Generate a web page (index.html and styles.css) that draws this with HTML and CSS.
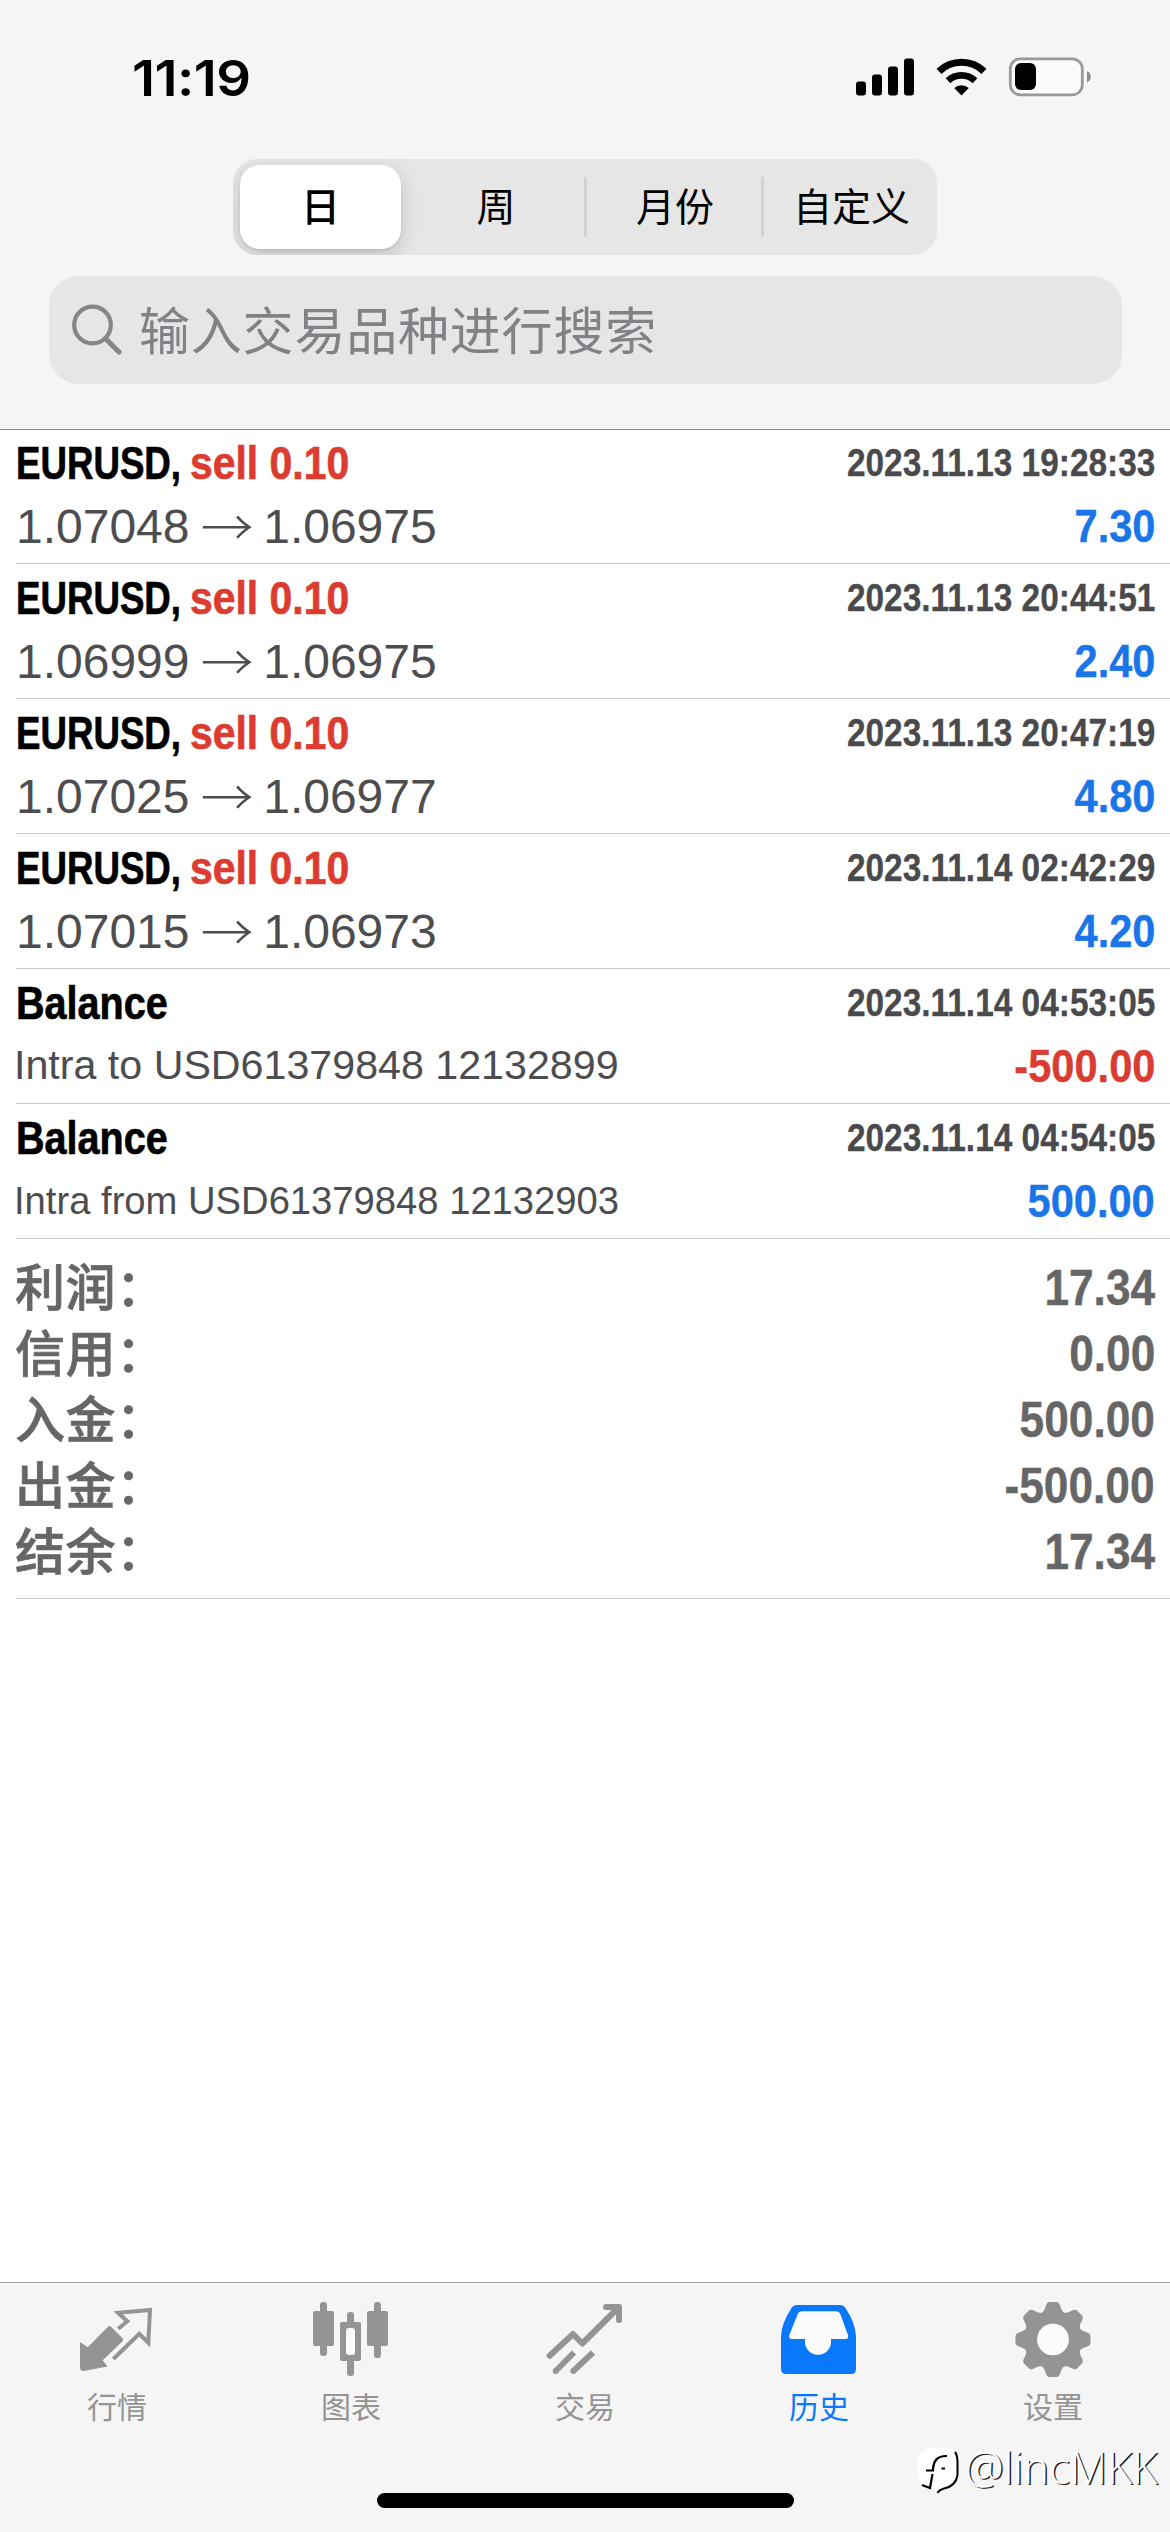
FILE: index.html
```html
<!DOCTYPE html>
<html lang="zh-CN">
<head>
<meta charset="utf-8">
<title>历史</title>
<link rel="stylesheet" href="styles.css">
</head>
<body>
<div class="screen">
  <header class="top">
    <div class="status">
      <span class="clock">11:19</span>
      <svg class="status-icons" width="236" height="40" viewBox="0 0 236 40">
        <rect x="0" y="24.5" width="10" height="14" rx="3"/>
        <rect x="16" y="17.5" width="10" height="21" rx="3"/>
        <rect x="32" y="9.500" width="10" height="29" rx="3"/>
        <rect x="48" y="1.500" width="10" height="37" rx="3"/>
        <path d="M105.500 38.500l-7.300-7.400a10.500 10.500 0 0 1 14.600 0z"/>
        <path d="M92 23.800a19.500 19.500 0 0 1 27 0" fill="none" stroke="#000" stroke-width="6.800"/>
        <path d="M83 14.300a32.500 32.500 0 0 1 45 0" fill="none" stroke="#000" stroke-width="7.200"/>
        <rect x="154.300" y="1.800" width="72" height="36" rx="10" fill="#fbfbfb" stroke="#999" stroke-width="2.800"/>
        <rect x="159" y="6" width="21" height="27" rx="6"/>
        <path d="M231 14c5 2 5 9.500 0 11.500z" fill="#8c8c8c"/>
      </svg>
    </div>
    <nav class="segments">
      <span class="segment selected">日</span>
      <span class="segment">周</span>
      <span class="segment divided">月份</span>
      <span class="segment divided">自定义</span>
    </nav>
    <div class="search">
      <svg width="52" height="52" viewBox="0 0 52 52" fill="none" stroke="#85858a">
        <circle cx="21.500" cy="21" r="18.300" stroke-width="4.200"/>
        <path d="M34.500 34.500L48 48" stroke-width="5.200" stroke-linecap="round"/>
      </svg>
      <span>输入交易品种进行搜索</span>
    </div>
  </header>

  <main class="content">
    <section class="deals">
      <article class="deal">
        <div class="line"><div class="title"><span class="symbol">EURUSD,</span><span class="sell">sell 0.10</span></div><time>2023.11.13 19:28:33</time></div>
        <div class="line second"><span class="price">1.07048 <i>→</i> 1.06975</span><span class="amount">7.30</span></div>
      </article>
      <article class="deal">
        <div class="line"><div class="title"><span class="symbol">EURUSD,</span><span class="sell">sell 0.10</span></div><time>2023.11.13 20:44:51</time></div>
        <div class="line second"><span class="price">1.06999 <i>→</i> 1.06975</span><span class="amount">2.40</span></div>
      </article>
      <article class="deal">
        <div class="line"><div class="title"><span class="symbol">EURUSD,</span><span class="sell">sell 0.10</span></div><time>2023.11.13 20:47:19</time></div>
        <div class="line second"><span class="price">1.07025 <i>→</i> 1.06977</span><span class="amount">4.80</span></div>
      </article>
      <article class="deal">
        <div class="line"><div class="title"><span class="symbol">EURUSD,</span><span class="sell">sell 0.10</span></div><time>2023.11.14 02:42:29</time></div>
        <div class="line second"><span class="price">1.07015 <i>→</i> 1.06973</span><span class="amount">4.20</span></div>
      </article>
      <article class="deal">
        <div class="line"><div class="title"><span class="balance">Balance</span></div><time>2023.11.14 04:53:05</time></div>
        <div class="line second"><span class="note">Intra to USD61379848 12132899</span><span class="amount loss">-500.00</span></div>
      </article>
      <article class="deal">
        <div class="line"><div class="title"><span class="balance">Balance</span></div><time>2023.11.14 04:54:05</time></div>
        <div class="line second"><span class="note small">Intra from USD61379848 12132903</span><span class="amount">500.00</span></div>
      </article>
    </section>
    <section class="summary">
      <div class="total"><span class="label">利润：</span><span class="sum">17.34</span></div>
      <div class="total"><span class="label">信用：</span><span class="sum">0.00</span></div>
      <div class="total"><span class="label">入金：</span><span class="sum">500.00</span></div>
      <div class="total"><span class="label">出金：</span><span class="sum">-500.00</span></div>
      <div class="total"><span class="label">结余：</span><span class="sum">17.34</span></div>
    </section>
  </main>

  <footer class="bottom">
    <nav class="tabs">
      <div class="tab">
        <svg viewBox="0 0 80 80">
          <path d="M3 42L10.700 47.300 31 26.800q1.500-1.500 3 0L45.500 38.300q1.500 1.500 0 3L25.700 60.300 30.500 66.500 6.500 71q-3.500 0-3.500-3z"/>
          <path d="M41.300 28.700L50.300 21.200 41 12.800 73 10 71.300 42.700 62.300 33.800 36.300 59" fill="none" stroke="currentColor" stroke-width="4"/>
        </svg>
        <span>行情</span>
      </div>
      <div class="tab">
        <svg viewBox="0 0 80 80">
          <rect x="9" y="2" width="7" height="54" rx="3"/><rect x="2" y="11" width="21" height="35" rx="2"/>
          <rect x="63" y="2" width="7" height="56" rx="3"/><rect x="56" y="11" width="21" height="35" rx="2"/>
          <rect x="36" y="12" width="7" height="64" rx="3"/><rect x="29" y="22" width="21" height="39" rx="2"/>
          <rect x="35" y="28" width="9" height="27" rx="3" fill="#fbfbfb"/>
        </svg>
        <span>图表</span>
      </div>
      <div class="tab">
        <svg viewBox="0 0 80 80" fill="none" stroke="currentColor" stroke-width="6">
          <path d="M4.700 55.700L28 34 37.300 43.500 73.500 7.500" stroke-linecap="round" stroke-linejoin="round"/>
          <path d="M61 7H74V20" stroke-linecap="round" stroke-linejoin="round"/>
          <circle cx="10.700" cy="71" r="3" fill="currentColor" stroke="none"/><circle cx="28.300" cy="71" r="3" fill="currentColor" stroke="none"/>
          <path d="M10.700 71L29 52.500M28.300 71L48 52.500"/>
        </svg>
        <span>交易</span>
      </div>
      <div class="tab active">
        <svg viewBox="0 0 80 80">
          <path fill-rule="evenodd" d="M18 5H61Q64.500 5 66.500 8Q77 24 77 37V69Q77 74 72 74H7Q2 74 2 69V37Q2 24 12.500 8Q14.500 5 18 5zM23 11.300Q20 11.300 18.500 14.500L10.300 35Q9.500 39 13 39H26V42A13 12.700 0 0 0 52 42V39H66.500Q70 39 69 35L61.500 14.500Q60 11.300 57 11.300z"/>
          <path d="M24 12H56.500Q59 12 60.500 15L68 35Q69 38.500 66 38.500H51.500V42A12.500 12.300 0 0 1 26.500 42V38.500H13Q10.500 38.500 11.500 35L19.500 15Q21 12 24 12z" fill="#fbfbfb"/>
        </svg>
        <span>历史</span>
      </div>
      <div class="tab">
        <svg viewBox="-40 -39.500 80 80">
          <defs><path id="tooth" d="M-13.500-22L-9.500-28.500Q-8-30.500-7.300-33.500Q-6-37.500-3.500-37.500H3.500Q6-37.500 7.300-33.500Q8-30.500 9.500-28.500L13.500-22z"/></defs>
          <circle r="22.500" fill="none" stroke="currentColor" stroke-width="13.500"/>
          <use href="#tooth"/><use href="#tooth" transform="rotate(45)"/><use href="#tooth" transform="rotate(90)"/><use href="#tooth" transform="rotate(135)"/>
          <use href="#tooth" transform="rotate(180)"/><use href="#tooth" transform="rotate(225)"/><use href="#tooth" transform="rotate(270)"/><use href="#tooth" transform="rotate(315)"/>
          <circle r="15.700" fill="#fbfbfb"/>
        </svg>
        <span>设置</span>
      </div>
    </nav>
    <div class="home"></div>
    <div class="watermark">
      <svg width="44" height="50" viewBox="0 0 44 50">
        <path d="M13 1H30Q40 2 40.500 14V28Q39 39 27 41.500Q22 43 21 47Q19 41 12 40Q1 38 1 27V14Q1 3 13 1z" fill="#fff"/>
        <path d="M38 5Q40.500 8 40.500 16V28Q39 39 27 41.500Q22 43 20.500 46" fill="none" stroke="#000" stroke-width="2"/>
        <path d="M5 38L13 41L15.500 27M9 23.500H16Q16 8.500 30 9M24.500 21.500H28" fill="none" stroke="#000" stroke-width="2.200"/>
      </svg>
      <span>@lincMKK</span>
    </div>
  </footer>
</div>
</body>
</html>
```
FILE: styles.css
```css
* { box-sizing: border-box; }
body {
  margin: 0;
  background: #fff;
  font-family: "Liberation Sans", "Noto Sans CJK SC", sans-serif;
}
.screen {
  width: 1170px;
  height: 2532px;
  display: flex;
  flex-direction: column;
  background: #fff;
  overflow: hidden;
}

/* Header */
.top {
  height: 430px;
  flex: none;
  background: #f5f5f5;
  border-bottom: 1px solid #8c8c8c;
}
.status {
  height: 159px;
  padding: 57px 78px 0 132px;
  display: flex;
  justify-content: space-between;
  align-items: flex-start;
}
.clock {
  font: 600 50px/42px Inter, sans-serif;
  letter-spacing: -0.5px;
  transform: scaleX(1.09);
  transform-origin: left;
}
.status-icons { display: block; }
.segments {
  width: 704px;
  height: 96px;
  margin-left: 233px;
  padding: 6px 0;
  border-radius: 24px;
  background: #e6e6e6;
  display: grid;
  grid-template-columns: 175px 176px 177px 176px;
  align-items: center;
  overflow: hidden;
}
.segment {
  padding-bottom: 6px;
  font: 400 39px/54px "Noto Sans CJK SC", sans-serif;
  text-align: center;
  color: #000;
}
.divided {
  padding-left: 2px;
  border-left: 3px solid #d2d2d2;
}
.selected {
  height: 84px;
  margin: 0 7px;
  line-height: 78px;
  font-weight: 500;
  border-radius: 20px;
  background: #fff;
  box-shadow: 0 6px 20px rgba(0, 0, 0, 0.16), 0 2px 3px rgba(0, 0, 0, 0.08);
}
.search {
  width: 1073px;
  height: 108px;
  margin: 21px 0 0 49px;
  padding-left: 22px;
  border-radius: 30px;
  background: #e6e6e8;
  display: flex;
  align-items: center;
  gap: 16px;
  color: #828286;
  font: 400 51px/72px "Noto Sans CJK SC", sans-serif;
  letter-spacing: 0.8px;
}
.search span { padding-bottom: 4px; }

/* Deals */
.content { flex: 1; }
.deals { margin-top: -1px; }
.deal, .summary {
  margin-left: 16px;
  padding-right: 15px;
  border-bottom: 1px solid #c6c6c8;
}
.deal {
  height: 135px;
  padding-top: 4px;
}
.line {
  height: 60px;
  display: flex;
  justify-content: space-between;
  align-items: center;
  white-space: nowrap;
}
.second { height: 65px; }
time, .amount, .sum { font-weight: 700; }
.title {
  display: flex;
  font-size: 47px;
  font-weight: 700;
  line-height: 54px;
  -webkit-text-stroke: 0.7px currentColor;
}
.title span {
  display: block;
  transform-origin: left;
}
.symbol {
  width: 174px;
  transform: scaleX(0.78);
}
.sell {
  color: #dc3c30;
  transform: scaleX(0.87);
}
.balance { transform: scaleX(0.842); }
time {
  font-size: 38.5px;
  color: #4a4a4d;
  transform: scaleX(0.868);
  transform-origin: right;
  -webkit-text-stroke: 0.3px currentColor;
}
.price {
  font-size: 48px;
  color: #4d4d50;
}
.price i {
  display: inline-block;
  width: 47px;
  line-height: 1;
  font-style: normal;
  font-family: "Noto Sans CJK SC", sans-serif;
  font-weight: 300;
  transform: translateY(2px) scaleX(1.1);
}
.note {
  font-size: 41.2px;
  color: #4d4d50;
  margin-left: -2px;
}
.note.small { font-size: 38.2px; }
.amount {
  font-size: 47px;
  color: #1a76e8;
  transform: scaleX(0.885);
  transform-origin: right;
  -webkit-text-stroke: 0.4px currentColor;
}
.amount.loss { color: #da3c32; }

/* Totals */
.summary { padding: 16px 15px 13px 0; }
.total {
  height: 66px;
  display: flex;
  justify-content: space-between;
  align-items: center;
  color: #666;
}
.label {
  margin: -8px 0 0 -1px;
  font: 500 50px/58px "Noto Sans CJK SC", sans-serif;
  letter-spacing: 0.5px;
  -webkit-text-stroke: 0.7px currentColor;
}
.sum {
  font-size: 50px;
  line-height: 58px;
  transform: scaleX(0.885);
  transform-origin: right;
  -webkit-text-stroke: 0.4px currentColor;
}

/* Tab bar */
.bottom {
  position: relative;
  height: 250px;
  flex: none;
  background: #f5f5f5;
  border-top: 1px solid #a8a8a8;
}
.tabs {
  display: grid;
  grid-template-columns: repeat(5, 234px);
  padding-top: 17px;
}
.tab {
  display: flex;
  flex-direction: column;
  align-items: center;
  color: #949494;
}
.tab svg {
  width: 80px;
  height: 80px;
  fill: currentColor;
}
.tab svg[fill="none"] { fill: none; }
.tab span {
  margin-top: 5px;
  font: 400 30px/40px "Noto Sans CJK SC", sans-serif;
}
.active { color: #0a78fb; }
.home {
  width: 417px;
  height: 15px;
  margin: 68px auto 0;
  border-radius: 8px;
  background: #000;
}
.watermark {
  position: absolute;
  left: 917px;
  top: 164px;
  display: flex;
  align-items: center;
  gap: 4px;
  color: #fff;
  font: 300 43.5px/50px "Open Sans", sans-serif;
  text-shadow: 1.5px 1px 0 #222;
}
.watermark span { margin-top: -8px; }
```
